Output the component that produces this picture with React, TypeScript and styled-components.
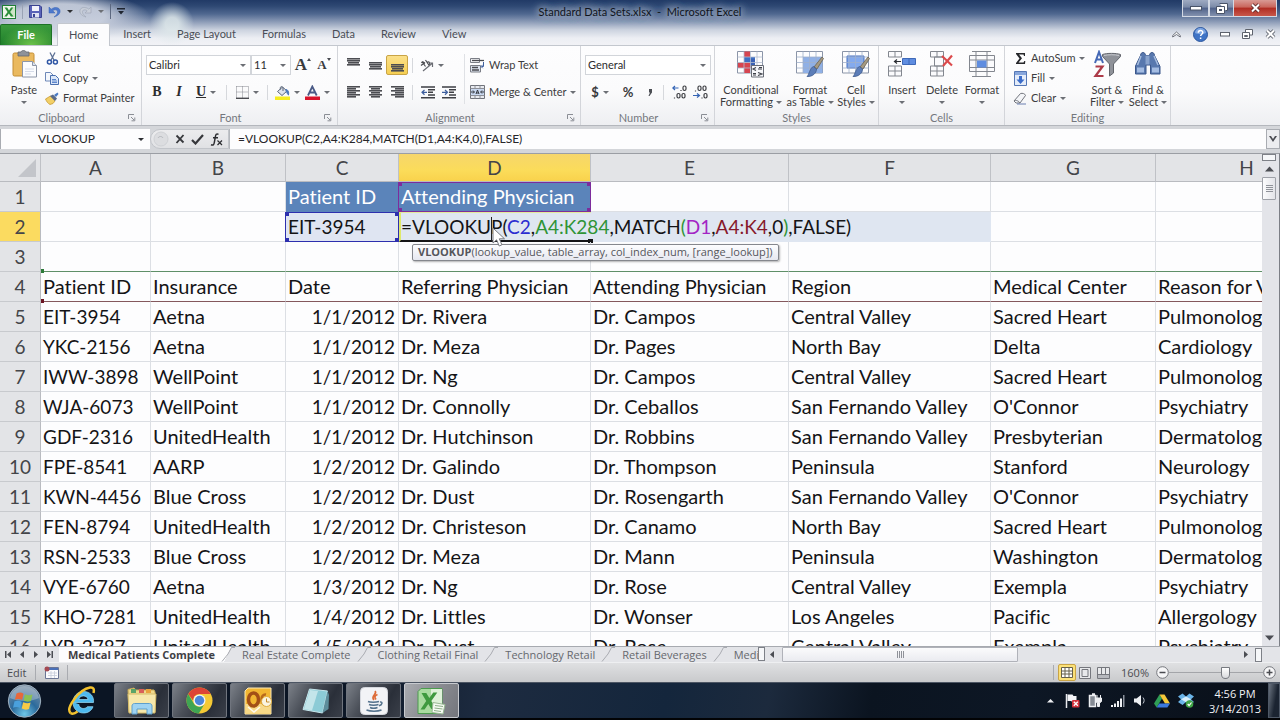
import React from "react";
import styled, { createGlobalStyle, css } from "styled-components";

const ui = `"Open Sans", "Noto Sans", sans-serif`;
const sheetFont = `Lato, "Liberation Sans", sans-serif`;

const GlobalStyle = createGlobalStyle`
  *, *::before, *::after { box-sizing: border-box; }
  html, body { margin: 0; }
  body { font: 11px/14px ${ui}; color: #3c3c3e; background: #e4e5e8; overflow: hidden; font-variant-ligatures: none; }
  button, input, select { font: inherit; color: inherit; margin: 0; padding: 0; border: 0; background: none; border-radius: 0; outline: none; }
  svg { display: block; flex: none; }
`;

/* ---------- frame ---------- */
const Window = styled.div`
  display: flex;
  flex-direction: column;
  height: 100vh;
  width: 100%;
  overflow: hidden;
`;

const Chrome = styled.header`
  flex: none;
  font-family: ${sheetFont};
  background:
    radial-gradient(ellipse 22px 22px at 172px 24px, rgba(222, 232, 234, 0.85) 30%, rgba(222, 232, 234, 0) 100%),
    radial-gradient(ellipse 90px 24px at 60px 16px, rgba(205, 211, 224, 0.9) 50%, rgba(205, 211, 224, 0) 100%),
    linear-gradient(#213a66 0, #2e4873 6px, #506890 14px, #8e9db8 22px, #ccd3df 30px, #eceef3 38px, #f1f2f6 45px);
`;

const TitleBar = styled.div`
  display: grid;
  grid-template-columns: 1fr auto 1fr;
  height: 23px;
`;

const QuickAccess = styled.div`
  display: flex;
  align-items: center;
  gap: 6px;
  padding-left: 2px;
`;

const TitleText = styled.h1`
  margin: 0;
  font-size: 11px;
  font-weight: 400;
  line-height: 23px;
  color: #10141c;
  text-shadow: 0 0 6px #a9b4c8, 0 0 8px #a9b4c8, 0 0 10px #a9b4c8, 0 0 12px #8f9cb5;
`;

const Caption = styled.div`
  display: flex;
  justify-content: flex-end;
  align-items: flex-start;
  padding-right: 3px;
`;

const CaptionButton = styled.button<{ $w: number; $close?: boolean }>`
  display: flex;
  align-items: center;
  justify-content: center;
  width: ${(p) => p.$w}px;
  height: 17px;
  && {
    border: 1px solid #d3d9e4;
    border-top: 0;
    border-left-width: ${(p) => (p.$close ? 0 : 1)}px;
    background: ${(p) =>
      p.$close
        ? "linear-gradient(#d99a94 0, #c9655b 45%, #b02c22 50%, #c8574a 100%)"
        : "linear-gradient(#9fabc2 0, #7b8aa8 45%, #4f6189 50%, #8291ae 100%)"};
  }
`;

const TabBar = styled.nav`
  display: flex;
  align-items: stretch;
  height: 23px;
  border-bottom: 1px solid #c3c7ce;
`;

const FileTab = styled.button`
  width: 52px;
  && {
    margin: 1px 5px 0 0;
    color: #fff;
    font-weight: 700;
    border: 1px solid #1d7226;
    border-bottom: 0;
    border-radius: 2px 2px 0 0;
    background: radial-gradient(ellipse at 60% 100%, #6cc24a 0, rgba(90, 180, 60, 0) 70%), linear-gradient(#3a9a3c, #1f7f2b);
  }
`;

const Tab = styled.button<{ $active?: boolean }>`
  && { padding: 0 13px; color: #4a4e56; }
  ${(p) =>
    p.$active &&
    css`
      && {
        margin-bottom: -1px;
        padding: 0 11px;
        border: 1px solid #c3c7ce;
        border-bottom: 0;
        border-radius: 2px 2px 0 0;
        background: #fcfcfd;
      }
    `}
`;

const TabTools = styled.div`
  display: flex;
  align-items: center;
  gap: 12px;
  margin-left: auto;
  padding-right: 4px;
`;

const PlainButton = styled.button`
  display: flex;
  align-items: center;
  justify-content: center;
`;

/* ---------- ribbon ---------- */
const Ribbon = styled.section`
  flex: none;
  display: flex;
  height: 80px;
  font-family: ${sheetFont};
  background: linear-gradient(#fdfdfe 0, #fbfbfc 55%, #eeeff2 100%);
  border-bottom: 1px solid #b4b7bd;
`;

const Group = styled.div<{ $w: number }>`
  display: flex;
  flex-direction: column;
  flex: none;
  width: ${(p) => p.$w}px;
  border-right: 1px solid #d3d5da;
`;

const GroupBody = styled.div<{ $pad?: number }>`
  display: flex;
  flex: 1;
  padding-left: ${(p) => p.$pad ?? 4}px;
`;

const GroupLabel = styled.div<{ $launcher?: boolean }>`
  display: grid;
  grid-template-columns: ${(p) => (p.$launcher ? "1fr 18px" : "1fr")};
  align-items: center;
  height: 15px;
  color: #74777d;
  text-align: center;
`;

const Rows = styled.div`
  display: flex;
  flex-direction: column;
  gap: 7px;
  padding-top: 9px;
`;

const Row = styled.div`
  display: flex;
  align-items: center;
  height: 20px;
`;

const Tool = styled.button<{ $w?: number; $on?: boolean }>`
  display: flex;
  align-items: center;
  justify-content: center;
  gap: 4px;
  flex: none;
  width: ${(p) => (p.$w ? `${p.$w}px` : "auto")};
  height: 20px;
  white-space: nowrap;
  ${(p) =>
    p.$on &&
    css`
      && {
        border: 1px solid #c9a446;
        border-radius: 2px;
        background: linear-gradient(#fbe08a, #f6cf52);
      }
    `}
`;

const Letter = styled.span<{ $kind: "b" | "i" | "u" }>`
  font: 14px/16px "Liberation Serif", serif;
  font-weight: 700;
  color: #2c2c2e;
  font-style: ${(p) => (p.$kind === "i" ? "italic" : "normal")};
  text-decoration: ${(p) => (p.$kind === "u" ? "underline" : "none")};
`;

const GrowLetter = styled.span<{ $small?: boolean }>`
  display: flex;
  font: 700 ${(p) => (p.$small ? 13 : 17)}px/20px "Liberation Serif", serif;
  color: #3a3b3f;
  svg { margin-top: 3px; }
`;

const Glyph = styled.span`
  font-size: 13px;
  font-weight: 700;
  color: #3a3a3c;
`;

const Divider = styled.span<{ $m?: number; $c?: string }>`
  flex: none;
  width: 1px;
  height: 15px;
  margin: 0 ${(p) => p.$m ?? 4}px;
  background: ${(p) => p.$c ?? "#d6d8dc"};
`;

const BlockDivider = styled.span`
  flex: none;
  width: 1px;
  height: 50px;
  margin: 8px 5px 0;
  background: #dfe1e5;
`;

const Caret = styled.span<{ $dark?: boolean }>`
  flex: none;
  border: 3px solid transparent;
  border-top-color: ${(p) => (p.$dark ? "#2d2f33" : "#6c6f75")};
  border-bottom: 0;
`;

const Combo = styled.span<{ $w: number }>`
  display: flex;
  align-items: center;
  width: ${(p) => p.$w}px;
  height: 20px;
  padding-right: 4px;
  border: 1px solid #d2d5da;
  background: #fff;
  select {
    flex: 1;
    min-width: 0;
    padding-left: 2px;
    appearance: none;
    color: #2c2c2e;
  }
`;

const SmallList = styled.div`
  display: flex;
  flex-direction: column;
  padding-top: 2px;
`;

const SmallButton = styled.button`
  display: flex;
  align-items: center;
  gap: 4px;
  height: 20px;
  text-align: left;
  white-space: nowrap;
`;

const SmallIcon = styled.span`
  display: flex;
  justify-content: center;
  width: 14px;
`;

const Big = styled.button<{ $w: number }>`
  display: flex;
  flex-direction: column;
  align-items: center;
  justify-content: flex-start;
  flex: none;
  width: ${(p) => p.$w}px;
  && { padding-top: 4px; }
  line-height: 12px;
  white-space: nowrap;
  svg { margin-bottom: 6px; }
`;

const BigLine = styled.span`
  display: flex;
  align-items: center;
  justify-content: center;
  gap: 3px;
  height: 12px;
`;

/* ---------- formula bar ---------- */
const FormulaBar = styled.div`
  flex: none;
  display: flex;
  align-items: stretch;
  height: 27px;
  padding: 3px 0 4px;
  background: #d4d6da;
  font: 12px/20px ${sheetFont};
  color: #26262a;
`;

const NameBox = styled.label`
  display: flex;
  align-items: center;
  width: 150px;
  padding-right: 6px;
  background: #fdfdfe;
  border-left: 1px solid #a9acb2;
  input { flex: 1; min-width: 0; padding-right: 6px; text-align: center; }
`;

const FormulaTools = styled.div`
  display: flex;
  align-items: center;
  gap: 6px;
  width: 79px;
  padding-left: 2px;
  border: 1px solid #c2c5ca;
  border-radius: 10px 0 0 10px;
  background: linear-gradient(#ececee, #e0e1e4);
`;

const FormulaInput = styled.input`
  flex: 1;
  min-width: 0;
  && { padding-left: 8px; background: #fdfdfe; border-left: 1px solid #b5b8bd; }
`;

const Expand = styled.button`
  display: flex;
  align-items: center;
  justify-content: center;
  width: 14px;
  && { border: 1px solid #a9acb2; background: #ecedf0; }
`;

/* ---------- sheet ---------- */
const SheetArea = styled.main`
  flex: 1;
  display: flex;
  min-height: 0;
`;

const Viewport = styled.div`
  flex: 1;
  min-width: 0;
  overflow: hidden;
  background: #fdfdfe;
  border-top: 1px solid #9b9ea4;
`;

const Grid = styled.table`
  table-layout: fixed;
  width: 1338px;
  border-collapse: separate;
  border-spacing: 0;
  font: 20px/29px ${sheetFont};
  font-variant-ligatures: none;
  color: #141416;
`;

const ColHead = styled.th<{ $on?: boolean }>`
  height: 28px;
  padding: 0;
  font-size: 19px;
  font-weight: 400;
  line-height: 27px;
  color: #444549;
  border-right: 1px solid #bfc1c6;
  border-bottom: 1px solid #b9bbc0;
  background: ${(p) => (p.$on ? "linear-gradient(#f6d66b, #fbdc5a 60%, #f9d24c)" : "#e3e4e7")};
`;

const Corner = styled.td`
  padding: 0 4px 4px 0;
  vertical-align: bottom;
  border-right: 1px solid #bfc1c6;
  border-bottom: 1px solid #b9bbc0;
  background: #e3e4e7;
  svg { margin-left: auto; }
`;

const RowHead = styled.th<{ $on?: boolean }>`
  height: 30px;
  padding: 0;
  font-size: 19px;
  font-weight: 400;
  color: #444549;
  border-right: 1px solid #b9bbc0;
  border-bottom: 1px solid #c8cace;
  background: ${(p) => (p.$on ? "#fbdb60" : "#e3e4e7")};
`;

const Cell = styled.td<{ $right?: boolean; $code?: boolean; $kind?: "title" | "ref" | "edit" | "aboveTable" | "head" }>`
  position: relative;
  height: 30px;
  padding: 0 3px 0 2px;
  font-size: ${(p) => (p.$code ? 19 : 20)}px;
  white-space: nowrap;
  text-align: ${(p) => (p.$right ? "right" : "left")};
  border-right: 1px solid #dcdfe4;
  border-bottom: 1px solid #dcdfe4;
  ${(p) => p.$kind === "title" && css`background: #5b84ba; color: #fff; border-color: #5b84ba;`}
  ${(p) => p.$kind === "ref" && css`background: #dfe5f2;`}
  ${(p) => p.$kind === "edit" && css`background: #dfe6f1; border-color: #dfe6f1;`}
  ${(p) => p.$kind === "aboveTable" && css`border-bottom-color: #5f8f68;`}
  ${(p) => p.$kind === "head" && css`border-bottom-color: #84585d;`}
`;

const RangeBox = styled.span<{ $c: string }>`
  position: absolute;
  inset: 0 -1px -1px -1px;
  border: 1px solid ${(p) => p.$c};
  background:
    linear-gradient(${(p) => p.$c} 0 0) 0 0 / 3px 3px no-repeat,
    linear-gradient(${(p) => p.$c} 0 0) 100% 0 / 3px 3px no-repeat,
    linear-gradient(${(p) => p.$c} 0 0) 0 100% / 3px 3px no-repeat,
    linear-gradient(${(p) => p.$c} 0 0) 100% 100% / 3px 3px no-repeat;
`;

const RangeHandle = styled.span<{ $c: string }>`
  position: absolute;
  left: 0;
  bottom: -2px;
  width: 3px;
  height: 4px;
  background: ${(p) => p.$c};
`;

const EditEdge = styled.span`
  position: absolute;
  left: 0;
  top: 0;
  bottom: -1px;
  width: 192px;
  border-left: 2px solid #dfe96a;
  border-top: 1px solid #e3ea9a;
  border-bottom: 2px solid #151517;
`;

const FillHandle = styled.span`
  position: absolute;
  left: 189px;
  bottom: -2px;
  width: 5px;
  height: 4px;
  background: #151517;
`;

const EditText = styled.span`
  position: relative;
`;

const Ink = styled.span<{ $c: string }>`
  color: ${(p) => p.$c};
`;

const TextCaret = styled.span`
  display: inline-block;
  width: 1px;
  height: 24px;
  margin: -6px -1px -6px 0;
  vertical-align: middle;
  background: #222;
`;

const Pointer = styled.svg`
  position: absolute;
  left: 93px;
  top: 15px;
  z-index: 3;
`;

const Hint = styled.span`
  position: absolute;
  left: 13px;
  top: 32px;
  z-index: 2;
  height: 17px;
  padding: 0 5px;
  font: 11px/14px ${ui};
  color: #55565c;
  border: 1px solid #85878d;
  border-radius: 2px;
  background: linear-gradient(#fdfdfe, #e6e8f0);
  box-shadow: 1px 1px 2px rgba(0, 0, 0, 0.3);
`;

const VScroll = styled.div`
  display: flex;
  flex-direction: column;
  align-items: center;
  flex: none;
  width: 18px;
  padding-right: 3px;
  background: #e3e4e9;
  border-top: 1px solid #9b9ea4;
  border-right: 1px solid #7c7f86;
`;

const SplitGrip = styled.span<{ $side?: boolean }>`
  flex: none;
  width: ${(p) => (p.$side ? 7 : 14)}px;
  height: ${(p) => (p.$side ? 14 : 7)}px;
  border: 1px solid #7d8087;
  background: #f6f7f9;
`;

const VThumb = styled.div`
  display: flex;
  align-items: center;
  justify-content: center;
  width: 14px;
  height: 23px;
  border: 1px solid #9ea1a8;
  border-radius: 1px;
  background: linear-gradient(90deg, #fcfcfd, #e3e4e9);
`;

const Push = styled.span`
  flex: 1;
`;

/* ---------- sheet tabs ---------- */
const SheetBar = styled.div`
  flex: none;
  display: flex;
  align-items: stretch;
  height: 16px;
  padding-right: 2px;
  background: #e3e4e8;
  border-top: 1px solid #a7aab0;
`;

const SheetNav = styled.div`
  display: flex;
  align-items: center;
  justify-content: space-between;
  width: 59px;
  padding: 0 6px 0 5px;
`;

const SheetTabs = styled.div`
  display: flex;
  flex: none;
  width: 699px;
  overflow: hidden;
`;

const SheetTab = styled.button<{ $active?: boolean }>`
  flex: none;
  display: flex;
  align-items: center;
  gap: 6px;
  && {
    padding-left: ${(p) => (p.$active ? 9 : 7)}px;
    color: ${(p) => (p.$active ? "#3f4045" : "#66686e")};
    font-weight: ${(p) => (p.$active ? 700 : 400)};
    background: ${(p) => (p.$active ? "linear-gradient(115deg, #fdfdfe 94%, transparent 94%)" : "transparent")};
  }
  white-space: nowrap;
`;

const HScroll = styled.div`
  display: flex;
  align-items: center;
  flex: 1;
  gap: 6px;
  padding-right: 16px;
`;

const HTrack = styled.div`
  flex: 1;
  align-self: stretch;
`;

const HThumb = styled.div`
  display: flex;
  align-items: center;
  justify-content: center;
  width: 52%;
  height: 100%;
  border: 1px solid #b0b2b9;
  border-radius: 1px;
  background: linear-gradient(#fbfbfc, #eaebf0);
`;

const StatusBar = styled.footer`
  flex: none;
  display: flex;
  align-items: center;
  height: 20px;
  padding: 0 4px 0 7px;
  background: linear-gradient(#dfe0e2, #c9cacc);
  border-top: 1px solid #eeeff1;
  color: #4a4b50;
`;

const ViewButton = styled.button<{ $on?: boolean }>`
  display: flex;
  align-items: center;
  justify-content: center;
  width: 18px;
  height: 17px;
  ${(p) => p.$on && css`&& { border: 1px solid #c9a446; border-radius: 2px; background: #fbe178; }`}
`;

const ZoomValue = styled.span`
  margin: 0 7px 0 9px;
`;

const ZoomSlider = styled.input`
  width: 94px;
  height: 16px;
  appearance: none;
  && { background: linear-gradient(#a3a5a9, #a3a5a9) center / 100% 1px no-repeat; }
  &::-webkit-slider-thumb {
    appearance: none;
    width: 9px;
    height: 12px;
    border: 1px solid #777a80;
    border-radius: 1px 1px 5px 5px;
    background: linear-gradient(#fff, #d9dadd);
  }
`;

/* ---------- taskbar ---------- */
const Taskbar = styled.nav`
  flex: none;
  display: flex;
  align-items: stretch;
  height: 38px;
  border-top: 1px solid #4c5563;
  border-bottom: 2px solid #020305;
  background: linear-gradient(100deg, #0b1524 0 26%, #1d2b40 38%, #14263c 52%, #1c2a3d 60%, #0b1420 68%, #0d1725 80%, #090f18 100%);
`;

const Pinned = styled.button<{ $w: number }>`
  display: flex;
  align-items: center;
  justify-content: center;
  width: ${(p) => p.$w}px;
`;

const TaskButton = styled.button<{ $active?: boolean }>`
  display: flex;
  align-items: center;
  justify-content: center;
  width: 55px;
  && {
    margin-right: 3px;
    border: 1px solid ${(p) => (p.$active ? "#c7cacf" : "#70757e")};
    border-radius: 2px;
    background: ${(p) =>
      p.$active
        ? "linear-gradient(120deg, #a9abb0, #8a8c92 50%, #74767c)"
        : "linear-gradient(120deg, #7b8088 0, #4b5059 35%, #2a2f39 70%, #3a3f49 100%)"};
  }
`;

const Tray = styled.div`
  display: flex;
  align-items: center;
  gap: 8px;
  margin-left: auto;
  padding-right: 11px;
`;

const Clock = styled.time`
  align-self: center;
  width: 60px;
  margin-right: 3px;
  color: #f1f3f6;
  line-height: 15px;
  text-align: center;
`;

const ShowDesktop = styled.button`
  width: 12px;
  && { border: 1px solid #4e5866; background: linear-gradient(100deg, #6b7480, #1b2431 60%); }
`;

/* ---------- icons ---------- */
const ExcelIcon = ({ size = 14 }: { size?: number }) => (
  <svg width={size} height={size} viewBox="0 0 14 14">
    <rect x="0.5" y="0.5" width="13" height="13" fill="#eef6ea" stroke="#1e7f35" />
    <path d="M9 2h4v10H9z" fill="#cfe6c8" />
    <path d="M2.500 2.500h2.600L7 5.600l2-3.100h2.300L8.200 7l3.300 4.600H8.800L6.900 8.500 4.800 11.600H2.300L5.600 7z" fill="#2b8f3a" />
  </svg>
);
const SaveIcon = () => (
  <svg width="13" height="13" viewBox="0 0 13 13">
    <path d="M0.500 0.500h10.500l1.500 1.500v10.500h-12z" fill="#5a63b8" stroke="#3a4390" />
    <path d="M3 1h7v5H3z" fill="#f3f4fb" />
    <path d="M3 8h7v4.500H3z" fill="#dfe2f2" />
    <path d="M4 9h2v3H4z" fill="#3a4390" />
  </svg>
);
const UndoIcon = () => (
  <svg width="13" height="12" viewBox="0 0 13 12">
    <path d="M1 1v6h6L4.800 4.800C7 3 10 3.800 9.500 6.500 9.300 8 8 9.500 6 11c4-1 6.500-3.500 6-6.500C11.400 1 6.500.5 3.200 3.200z" fill="#4d79cc" stroke="#3560b4" strokeWidth="0.500" />
  </svg>
);
const RedoIcon = () => (
  <svg width="13" height="12" viewBox="0 0 13 12" opacity="0.700">
    <path d="M12 1v6H6l2.200-2.200C6 3 3 3.800 3.500 6.500 3.700 8 5 9.500 7 11 3 10 .5 7.500 1 4.500 1.600 1 6.500.5 9.800 3.200z" fill="#ccd1da" stroke="#8d95a5" strokeWidth="0.600" />
  </svg>
);
const CustomizeIcon = () => (
  <svg width="8" height="7" viewBox="0 0 8 7"><path d="M0 0h8v1.500H0zM1 3h6L4 6.500z" fill="#1f2530" /></svg>
);
const MinIcon = () => (
  <svg width="12" height="5" viewBox="0 0 12 5"><rect x="0.500" y="0.500" width="11" height="3.500" fill="#fff" stroke="#4a5468" /></svg>
);
const RestoreIcon = () => (
  <svg width="12" height="11" viewBox="0 0 12 11">
    <path d="M3.500.5h8v7h-2M.5 3.500h8v7h-8z" fill="#fff" stroke="#4a5468" />
    <path d="M3 6h3v2H3z" fill="#4a5468" />
  </svg>
);
const CloseIcon = ({ line = "#5c2a2a" }: { line?: string }) => (
  <svg width="11" height="10" viewBox="0 0 11 10">
    <path d="M2 1.500l7 7M9 1.500l-7 7" stroke={line} strokeWidth="3.800" />
    <path d="M2 1.500l7 7M9 1.500l-7 7" stroke="#fff" strokeWidth="2" />
  </svg>
);
const CollapseIcon = () => (
  <svg width="9" height="7" viewBox="0 0 9 7"><path d="M.7 6V4.500L4.500 1l3.800 3.500V6L4.500 3.500z" fill="#fff" stroke="#5d626c" strokeWidth="0.900" /></svg>
);
const HelpIcon = () => (
  <svg width="15" height="15" viewBox="0 0 15 15">
    <circle cx="7.500" cy="7.500" r="7" fill="#3f74c6" stroke="#2c579e" />
    <path d="M2 6a5.500 5 0 0 1 11 0c-3 1.500-8 1.500-11 0z" fill="#7ea6e2" />
    <path d="M5.300 5.800c0-3 4.500-3 4.500-.3 0 1.700-2.200 1.800-2.200 3.600M7.600 10.600v1.500" stroke="#fff" strokeWidth="1.500" fill="none" />
  </svg>
);
const DocMinIcon = () => (
  <svg width="10" height="5" viewBox="0 0 10 5"><rect x="0.500" y="0.500" width="9" height="3.500" fill="#fff" stroke="#5d626c" /></svg>
);
const DocRestoreIcon = () => (
  <svg width="11" height="10" viewBox="0 0 11 10"><path d="M3.500 3V.5h7v5.500H8M.5 3.500h7v6h-7zM2.500 6.500h3v1h-3z" fill="#fff" stroke="#5d626c" /></svg>
);
const PasteIcon = () => (
  <svg width="28" height="28" viewBox="0 0 28 28">
    <rect x="3" y="3" width="21" height="23" rx="1.500" fill="#eab95f" stroke="#c48e35" />
    <path d="M8 2h3c.5-2 4.500-2 5 0h3v4H8z" fill="#8e9299" stroke="#64686f" strokeWidth="0.800" />
    <path d="M12.500 11.500h10l4 4v11.500h-14z" fill="#fbfcfe" stroke="#8d96a8" />
    <path d="M22.500 11.500v4h4" fill="#dce3ef" stroke="#8d96a8" />
    <path d="M15 19h9M15 21.500h9M15 24h6" stroke="#d5dbe8" />
  </svg>
);
const CutIcon = () => (
  <svg width="13" height="13" viewBox="0 0 13 13">
    <path d="M4 .5l4.200 8M9 .5l-4.200 8" stroke="#5b6f94" strokeWidth="1.300" />
    <circle cx="3.400" cy="10" r="2" fill="none" stroke="#2f56a5" strokeWidth="1.500" />
    <circle cx="9.400" cy="10" r="2" fill="none" stroke="#2f56a5" strokeWidth="1.500" />
  </svg>
);
const CopyIcon = () => (
  <svg width="14" height="13" viewBox="0 0 14 13">
    <path d="M.5.5h5l2.500 2.500v6H.5z" fill="#f4f7fc" stroke="#6e88b8" />
    <path d="M5.500 3.500h5l3 3v6h-8z" fill="#dce7f8" stroke="#4a6fae" />
    <path d="M7 7.500h4M7 9h5M7 10.500h5" stroke="#5d86cc" />
  </svg>
);
const PainterIcon = () => (
  <svg width="14" height="13" viewBox="0 0 14 13">
    <path d="M.5 7l5-3 4.500 5-2 2.500-3 1c-2-1-3.500-3-4.500-5.500z" fill="#f2cf66" stroke="#c79a34" strokeWidth="0.800" />
    <path d="M5 4l3-1.500 4 4-2 2.500z" fill="#5a6a88" />
    <path d="M9 3l3.500-2.500L13.500 2 11 5z" fill="#4a7ac4" />
  </svg>
);
const LauncherIcon = () => (
  <svg width="8" height="8" viewBox="0 0 8 8"><path d="M.5 5V.5H6M3 3l3 3M6.800 3.500v3.300H3.500" fill="none" stroke="#8b8e95" /></svg>
);
const BordersIcon = () => (
  <svg width="13" height="13" viewBox="0 0 13 13">
    <path d="M.5.5h12v11M.5.5v11M6.500.5v11M.5 6h12" fill="none" stroke="#85878e" strokeDasharray="1 1" />
    <path d="M0 12.300h13" stroke="#4a4b50" strokeWidth="1.400" />
  </svg>
);
const FillColorIcon = () => (
  <svg width="15" height="15" viewBox="0 0 15 15">
    <path d="M2.500 6.500l5-4.500 4.500 4-5 4.500z" fill="#dfe4ec" stroke="#5a6579" />
    <path d="M5.500 4.500c-1-3 1.500-4 2.500-1.500v3" fill="none" stroke="#5a6579" />
    <path d="M11 4.500c2.500.5 3 2.500 2.500 5.500-1-.5-1.500-2.500-2.500-4z" fill="#4c79bb" stroke="#4c79bb" />
    <path d="M0 11.500h15v3.500H0z" fill="#f6ec1e" />
  </svg>
);
const FontColorIcon = () => (
  <svg width="15" height="15" viewBox="0 0 15 15">
    <path d="M3 10.500L7.300 1.500l4.400 9M4.500 7.500h5.500" fill="none" stroke="#4a5a86" strokeWidth="1.800" />
    <path d="M0 11.500h15v3.500H0z" fill="#d9142c" />
  </svg>
);
const LinesIcon = ({ rows, top = 0 }: { rows: number[][]; top?: number }) => (
  <svg width="13" height="14" viewBox="0 0 13 14">
    {rows.map(([x, w], i) => (
      <rect key={i} x={x} y={top + i * 2} width={w} height="1.600" fill="#4c4d52" />
    ))}
  </svg>
);
const full = [[0, 13], [0, 13], [1, 11], [0, 13]];
const OrientationIcon = () => (
  <svg width="14" height="14" viewBox="0 0 14 14">
    <path d="M1 7.500l4-3M2 3.500l3.500 5M1.500 5c1-2 3-1 3 1M5.500 2l4 6M7 4.500c2-2 4 1 1.500 3" fill="none" stroke="#4c4d52" strokeWidth="1.200" />
    <path d="M3 13L12 5.500M12.500 9V5H9" fill="none" stroke="#6b6d74" strokeWidth="1.200" />
  </svg>
);
const IndentIcon = ({ out }: { out?: boolean }) => (
  <svg width="14" height="13" viewBox="0 0 14 13">
    <path d="M0 1h14M7 3.700h7M7 6.300h5M7 9h7M0 11.700h14" stroke="#3e3f44" strokeWidth="1.600" />
    <path d={out ? "M6 6.300H1.500M3.500 4L1 6.300l2.500 2.400" : "M0 6.300h4.500M3 4l2.500 2.300L3 8.700"} fill="none" stroke="#3e5f9e" strokeWidth="1.200" />
  </svg>
);
const WrapIcon = () => (
  <svg width="15" height="15" viewBox="0 0 15 15">
    <path d="M.5.5h9v4h-9z" fill="#f1f2f5" stroke="#7b7e86" />
    <path d="M2 2.500h12" stroke="#4a4b50" strokeWidth="1.300" />
    <path d="M.5 7.500h10v6.500H.5z" fill="#dde3ee" stroke="#7b7e86" />
    <path d="M2 9.500h6M2 12h7" stroke="#4a4b50" strokeWidth="1.300" />
    <path d="M13.500 4v4.500h-2M12.700 6.800l-1.700 1.700 1.700 1.700" fill="none" stroke="#3e5f9e" />
  </svg>
);
const MergeIcon = () => (
  <svg width="15" height="14" viewBox="0 0 15 14">
    <path d="M.5.5h14v13H.5z" fill="#e9ebf0" stroke="#70737b" />
    <path d="M.5 3.500h14M.5 10.500h14M5 .5v3M10 .5v3M5 10.500v3M10 10.500v3" stroke="#8d9098" />
    <path d="M1 4h13v6H1z" fill="#c9d8f0" />
    <path d="M1 7h3M11 7h3M3 5.500L4.500 7 3 8.500M12 5.500L10.500 7 12 8.500M6 9l1.500-4L9 9M6.500 8h2" fill="none" stroke="#33363d" />
  </svg>
);
const DecimalIcon = ({ dec }: { dec?: boolean }) => (
  <svg width="15" height="14" viewBox="0 0 15 14">
    <g fill="none" stroke="#3f4045" strokeWidth="1.200">
      {dec ? (
        <>
          <rect x="5" y="1" width="3" height="4.500" rx="1.400" /><rect x="10" y="1" width="3" height="4.500" rx="1.400" />
          <rect x="11" y="8.500" width="3" height="4.500" rx="1.400" /><path d="M2.500 5.500v1M9 12.500v1" />
        </>
      ) : (
        <>
          <rect x="11" y="1" width="3" height="4.500" rx="1.400" /><path d="M9 5v1M2.500 12.500v1" />
          <rect x="5" y="8.500" width="3" height="4.500" rx="1.400" /><rect x="10" y="8.500" width="3" height="4.500" rx="1.400" />
        </>
      )}
    </g>
    <path d={dec ? "M0 10.500h6M4 8.500l2.500 2L4 12.500" : "M6.500 3H1M3 1L.8 3 3 5"} fill="none" stroke="#3565b5" strokeWidth="1.200" />
  </svg>
);
const GridBase = ({ fill, brush }: { fill: React.ReactNode; brush: React.ReactNode }) => (
  <svg width="28" height="28" viewBox="0 0 28 28">
    <path d="M.5 1.500h26v21.500H.5z" fill="#fdfdfe" stroke="#8b95a8" />
    {fill}
    <path d="M.5 7h26M.5 12.500h26M.5 18h26M7 1.500v21.500M13.500 1.500v21.500M20 1.500v21.500" fill="none" stroke="#9fb0cc" strokeWidth="0.800" />
    {brush}
  </svg>
);
const CondIcon = () => (
  <svg width="28" height="28" viewBox="0 0 28 28">
    <path d="M.5 1.500h25v21.500H.5z" fill="#fdfdfe" stroke="#8b95a8" />
    <path d="M7 1.500h6v5.500H7zM1 12.500h6V18H1zM7 18h6v5H7z" fill="#d64550" />
    <path d="M7 7h11v5.500H7z" fill="#3d6fc4" /><path d="M7 12.500h8V18H7z" fill="#d64550" /><path d="M13 9h5v7h-5z" fill="#3b62b5" />
    <path d="M.5 7h25M.5 12.500h25M.5 18h25M7 1.500v21.500M13.500 1.500v21.500M20 1.500v21.500" stroke="#b3bdd0" strokeWidth="0.800" />
    <path d="M14.500 15.500h12v11.500h-12z" fill="#f6f7fa" stroke="#686c76" />
    <path d="M19 17.500l-3 1.500 3 1.500M21 19h4M22 17.500h3M16 23.500h3M16 25h3M21 22.500l4 1.500-4 1.500" fill="none" stroke="#3c3f47" strokeWidth="1.100" />
  </svg>
);
const Brush = () => (
  <>
    <path d="M26 7l1.500 1.500-6.500 10.500-3-2z" fill="#a59a82" stroke="#6b6250" strokeWidth="0.800" />
    <path d="M17.500 16.500l3 2.500c0 4-4 8-9.500 7.500 2-1.500 3-9 6.500-10z" fill="#5c7db8" stroke="#3e5a8e" strokeWidth="0.800" />
  </>
);
const FormatTableIcon = () => (
  <GridBase fill={<path d="M7 7h19.500v16H7z" fill="#8fb0e6" />} brush={<Brush />} />
);
const CellStylesIcon = () => (
  <GridBase fill={<path d="M5 6h17v12H5z" fill="#84aaee" stroke="#456fc0" />} brush={<Brush />} />
);
const InsertIcon = () => (
  <svg width="28" height="28" viewBox="0 0 28 28">
    <path d="M.5 1.500h13v5.500H.5zM7 1.500V7M.5 16h13v10H.5zM.5 21h13M7 16v10" fill="#fbfbfd" stroke="#83878f" />
    <path d="M14.500 8.500h13v6h-13z" fill="#5f8de0" stroke="#3f69b8" /><path d="M21 8.500v6" stroke="#3f69b8" />
    <path d="M13 11.500H7M9 9.500l-2.500 2L9 13.500" fill="none" stroke="#2b2d33" strokeWidth="1.200" />
  </svg>
);
const DeleteIcon = () => (
  <svg width="24" height="28" viewBox="0 0 24 28">
    <path d="M.5 1.500h13v5.500H.5zM7 1.500V7M.5 16h13v10H.5zM.5 21h13M7 16v10M4.500 7h9v9h-9z" fill="#fbfbfd" stroke="#83878f" />
    <path d="M12 6l10 9.500M22 5.500L13 16" stroke="#dc4a4c" strokeWidth="2.200" />
  </svg>
);
const FormatIcon = () => (
  <svg width="28" height="28" viewBox="0 0 28 28">
    <path d="M1.500 5.500h25v16h-25z" fill="#fbfbfd" stroke="#83878f" />
    <path d="M8 1v25M19 1v25M1.500 10h25M1.500 17.500h25M4 1.500h19M4 26.500h19" fill="none" stroke="#83878f" />
    <path d="M9 10.500h9.500v7H9z" fill="#5f8de0" />
  </svg>
);
const SumIcon = () => (
  <svg width="13" height="13" viewBox="0 0 13 13"><path d="M2 1h9v3h-1L9.500 2.500H5L8 6.300 4.600 10.500H9.500L10.300 9h1L11 12H2v-1L5.500 6.500 2 2z" fill="#26272b" /></svg>
);
const FillIcon = () => (
  <svg width="13" height="15" viewBox="0 0 13 15">
    <path d="M.5.5h12v14H.5z" fill="#e4ecf9" stroke="#5577b5" /><path d="M1 1h11v3H1z" fill="#87a6dc" />
    <path d="M5 5h3v3.500h2.500L6.500 13 2.500 8.500H5z" fill="#3b6cc9" />
  </svg>
);
const ClearIcon = () => (
  <svg width="14" height="13" viewBox="0 0 14 13">
    <path d="M1 9L7.500 1.500c2-.5 4.500 0 5 2L7 11H3z" fill="#f4f5f8" stroke="#73767e" />
    <path d="M1 9c.5-1 4-1 6 2" fill="none" stroke="#73767e" /><path d="M4 12h9" stroke="#6a7fb0" />
  </svg>
);
const SortIcon = () => (
  <svg width="28" height="28" viewBox="0 0 28 28">
    <path d="M2 13L6 2l4 11M3.500 9.500h5" fill="none" stroke="#4468b5" strokeWidth="2" />
    <path d="M2.500 16.500h7L2.500 26h8" fill="none" stroke="#ac3a48" strokeWidth="2.200" />
    <path d="M9.500 4.500c4-1.500 14-1.500 18 0v2L20.500 14v9l-4 3V14L9.500 6.500z" fill="#8f9299" stroke="#62656c" />
    <path d="M11 5.500c4-1 11-1 15 0" stroke="#c8cad0" fill="none" />
  </svg>
);
const FindIcon = () => (
  <svg width="28" height="28" viewBox="0 0 28 28">
    <path d="M6.500 5.500c0-4 5-4 5 0h4c0-4 5-4 5 0l5.500 11v7.500h-9.500V15h-4.500v9H1.500v-8z" fill="#5878ae" stroke="#3b568a" />
    <path d="M11.500 5.500h4v9h-4z" fill="#89a3cd" />
    <path d="M3 17.500h7v5H3zM18 17.500h7v5h-7z" fill="#a4bce2" /><path d="M7 6l-3.500 9M20 6l4 9" stroke="#a8bee0" strokeWidth="1.500" />
  </svg>
);
const FlagX = () => (
  <svg width="15" height="15" viewBox="0 0 15 15">
    <path d="M1.500 1v14" stroke="#e8eaee" strokeWidth="1.500" /><path d="M2.500 1.500h5l1 1.500h3v6h-4L6 8H2.500z" fill="#f4f5f8" />
    <rect x="7" y="7" width="7.500" height="7.500" rx="1" fill="#d2323c" /><path d="M8.800 8.800l4 4M12.800 8.800l-4 4" stroke="#fff" strokeWidth="1.300" />
  </svg>
);
const PowerIcon = () => (
  <svg width="15" height="15" viewBox="0 0 15 15">
    <path d="M2.500 2.500h5v11h-6v-11zM4 1h3" fill="#858b94" stroke="#eef0f3" strokeWidth="1.500" />
    <path d="M7.500 5h6v3.500l-2 1.500v3.500h-2V10l-2-1.500zM9 2v3M12.500 2v3" fill="#eef0f3" stroke="#eef0f3" />
  </svg>
);
const SignalIcon = () => (
  <svg width="14" height="12" viewBox="0 0 14 12"><path d="M0 10h2v2H0zM3 8.500h2V12H3zM6 6h2v6H6zM9 3.500h2V12H9z" fill="#eef0f3" /><path d="M12 0h1.500v12H12z" fill="#8d949e" /></svg>
);
const SpeakerIcon = () => (
  <svg width="13" height="13" viewBox="0 0 13 13"><path d="M1 4.500h2.500L8 1v11L3.500 8.500H1z" fill="#eef0f3" /><path d="M10 3.500c1.500 2 1.500 4 0 6" fill="none" stroke="#bcc2cb" /></svg>
);
const DriveIcon = () => (
  <svg width="16" height="14" viewBox="0 0 16 14">
    <path d="M5.500.5L0 9.500l2.600 4L8 4.500z" fill="#2f9e56" /><path d="M5.500.5h5L16 9.500h-5z" fill="#f5c839" /><path d="M5.200 9.500H16l-2.600 4H2.600z" fill="#3b78dc" />
  </svg>
);
const DropboxIcon = () => (
  <svg width="16" height="15" viewBox="0 0 16 15">
    <path d="M4.500.5L0 3.500l3 2.800-3 2.700L4.500 12 8 9l3.500 3L16 9l-3-2.700 3-2.800-4.500-3L8 3.500z" fill="#6bb4e8" /><path d="M8 3.500L3 6.300 8 9.200l5-2.900z" fill="#d9eefb" />
    <circle cx="11.500" cy="11" r="3.800" fill="#3fa545" /><path d="M9.700 11l1.400 1.500 2.400-3" stroke="#fff" fill="none" strokeWidth="1.200" />
  </svg>
);
const StartOrb = () => (
  <svg width="35" height="34" viewBox="0 0 35 34">
    <defs>
      <radialGradient id="orb" cx="0.500" cy="0.900" r="0.900"><stop offset="0" stopColor="#6ec7e8" /><stop offset="0.450" stopColor="#2b6a9c" /><stop offset="1" stopColor="#8093a6" /></radialGradient>
    </defs>
    <circle cx="17.500" cy="17" r="16.200" fill="url(#orb)" stroke="#9fb0be" strokeWidth="1" />
    <path d="M3 14C5 5 12 2 17.500 2S30 5 32 14c-8 4-21 4-29 0z" fill="#fff" opacity="0.280" />
    <path d="M9.500 9.500c3-1.500 5-1.200 7 .2l-1.400 6.300c-2.500-1.300-4.500-1.300-7.200-.3z" fill="#e8683a" />
    <path d="M18 10.300c2.500 1.200 4.700 1.200 7.500.2L24 17c-2.700 1-5 .8-7.400-.4z" fill="#8cc152" />
    <path d="M7.500 17.300c2.700-1 4.700-.9 7.200.4L13.200 24c-2.300-1.300-4.500-1.300-7.200-.3z" fill="#4aa0dc" />
    <path d="M16.200 18.200c2.500 1.200 4.700 1.400 7.400.4L22 25c-2.600 1-4.800.8-7.300-.5z" fill="#f7cb45" />
  </svg>
);
const IeIcon = () => (
  <svg width="30" height="30" viewBox="0 0 30 30">
    <path d="M7.500 16.500h19c.8-6-3.500-11-9.800-11S6 10.300 6 16.300s4 10.700 10.500 10.700c4.500 0 8-2.200 9.500-6.300h-5.700c-2 3-8.300 2.300-8.500-2.500M11.800 13.500c.5-4.800 8.800-4.800 9.200 0z" fill="#4db9ee" fillRule="evenodd" stroke="#9adcf8" strokeWidth="0.700" />
    <path d="M3.500 27C-1.500 22 12 3.500 23 1.500c3.500-.6 4.500 1.500 3.500 5.500" fill="none" stroke="#f2c12e" strokeWidth="2.500" />
    <path d="M3.500 27c2 1.300 4.700.3 7-1.500" fill="none" stroke="#f2c12e" strokeWidth="2.500" />
  </svg>
);
const FolderIcon = () => (
  <svg width="32" height="30" viewBox="0 0 32 30">
    <path d="M2 3.500l6-1.500 2 2h18l1 2v20H3z" fill="#efd98d" stroke="#c9ac57" /><path d="M5 3h5v4H5z" fill="#5aa469" /><path d="M13 3h5v4h-5z" fill="#d9605a" /><path d="M20 3h5v4h-5z" fill="#e9a33e" />
    <path d="M2 8h28l-1 19H3z" fill="#f7e8ab" stroke="#d4bb6b" />
    <path d="M6 28v-8c0-1.500 1-2.500 2.500-2.500h15c1.500 0 2.500 1 2.500 2.500v8h-5v-5h-10v5z" fill="#9fd3f2" stroke="#5f9fcb" />
  </svg>
);
const ChromeIcon = () => (
  <svg width="27" height="27" viewBox="0 0 27 27">
    <circle cx="13.500" cy="13.500" r="13" fill="#f4c935" />
    <path d="M2.200 7A13 13 0 0 1 24.800 7H13.500c-4 0-6.500 3-6.300 6.800z" fill="#dc4437" />
    <path d="M2.200 7a13 13 0 0 0 10.600 19.500L18.500 17c-2.500 4-8.500 3.500-10.700-.5z" fill="#3fa553" />
    <circle cx="13.500" cy="13.500" r="6" fill="#f3f5f8" /><circle cx="13.500" cy="13.500" r="4.700" fill="#4b86d9" />
  </svg>
);
const OutlookIcon = () => (
  <svg width="28" height="28" viewBox="0 0 28 28">
    <path d="M4 1h23v26H1V4z" fill="#f2b632" stroke="#fbe9b6" /><path d="M1.500 17h25v9.500h-25z" fill="#f7d988" />
    <ellipse cx="9.500" cy="12.500" rx="5" ry="6.500" fill="none" stroke="#a34f16" strokeWidth="3.500" />
    <path d="M22 7.500c-6-1-6 11 0 10" fill="none" stroke="#b96a1c" strokeWidth="2.500" />
    <circle cx="22.500" cy="14.500" r="5" fill="#faf4e0" stroke="#e0ac3c" /><path d="M22.500 11.500v3.500h3" fill="none" stroke="#c58a2a" />
    <path d="M4 20l6 5 6-5" fill="none" stroke="#fffaf0" strokeWidth="1.500" />
  </svg>
);
const NotepadIcon = () => (
  <svg width="28" height="28" viewBox="0 0 28 28">
    <path d="M7.500 2l18 2-5 22L1 22.500z" fill="#8ccbd6" stroke="#c7e6ec" /><path d="M8 3l8 1-6 19.500-8-1.500z" fill="#c3e5ea" />
    <path d="M20.500 26l6-4 .5-14-1.500-4z" fill="#5d8d9b" />
  </svg>
);
const JavaIcon = () => (
  <svg width="28" height="28" viewBox="0 0 28 28">
    <rect x="0.500" y="0.500" width="27" height="27" rx="4" fill="#f2f3f6" stroke="#d4d7dd" />
    <path d="M15 4c3 3-5 5-1 9M17.500 7.500c-3.500 1.500-3 3-1.500 5" fill="none" stroke="#dd6b38" strokeWidth="1.700" />
    <path d="M8 14.500c2 1 8 1 11 0M9 17.500c2 1 7 1 9.500 0M10 20.500c2 1 5 1 7.500 0M20 15c3-.5 2.500 3-1 3.800M6.500 23c4 1.500 11 1.500 15 0" fill="none" stroke="#53718c" strokeWidth="1.500" />
  </svg>
);
const ExcelTaskIcon = () => (
  <svg width="29" height="28" viewBox="0 0 29 28">
    <path d="M4 1.500h21v19l-4 6H1v-22z" fill="#a9dba0" stroke="#4c9a4e" /><path d="M14 2h11v17H14z" fill="#dff2d9" />
    <path d="M4.500 6h4.800l3 5 4-5.500h4L14.300 14l5 8h-5l-3-5-3.800 5.500h-4L9.200 14z" fill="#3f9a3f" />
    <path d="M16 15.500l12 2-2 9.500-11-1.500z" fill="#f5faf2" stroke="#97b893" /><path d="M18 18.500l8 1M17.500 21l8 1M17 23.500l7 1" stroke="#8cae88" />
  </svg>
);
const MacroIcon = () => (
  <svg width="15" height="13" viewBox="0 0 15 13">
    <path d="M1.500 1.500h13v11h-13z" fill="#fbfbfd" stroke="#6a7594" /><path d="M4 2h10v2H4z" fill="#4a70b8" /><circle cx="3" cy="3" r="2.500" fill="#a44a52" />
    <path d="M4 7h9M4 9.500h9M7 5v7M10.500 5v7" stroke="#c5ccd9" strokeWidth="0.800" />
  </svg>
);
const NormalView = () => (
  <svg width="12" height="11" viewBox="0 0 12 11"><path d="M.5.5h11v10H.5zM.5 4h11M.5 7h11M4 .5v10M8 .5v10" fill="#fff" stroke="#66604a" /></svg>
);
const LayoutView = () => (
  <svg width="12" height="12" viewBox="0 0 12 12"><path d="M.5.5h11v11H.5zM3 2.500h6v7H3z" fill="#e8e9eb" stroke="#75777d" /></svg>
);
const BreakView = () => (
  <svg width="13" height="12" viewBox="0 0 13 12"><path d="M.5.500h12v11H.5zM.5 7.500h12M4.500.5v7M8.500.5v7" fill="#e8e9eb" stroke="#75777d" /><path d="M1 8h11v3H1z" fill="#b7b9be" /></svg>
);
const ZoomKnob = ({ plus }: { plus?: boolean }) => (
  <svg width="13" height="13" viewBox="0 0 13 13"><circle cx="6.500" cy="6.500" r="5.800" fill="#f6f6f7" stroke="#75777d" /><path d={plus ? "M3.500 6.500h6M6.500 3.500v6" : "M3.500 6.500h6"} stroke="#4a4b50" strokeWidth="1.500" /></svg>
);
const Tri = ({ d, w = 7, h = 7, c = "#4b4d53" }: { d: string; w?: number; h?: number; c?: string }) => (
  <svg width={w} height={h} viewBox={`0 0 ${w} ${h}`}><path d={d} fill={c} /></svg>
);
const Slant = () => (
  <svg width="14" height="15" viewBox="0 0 14 15"><path d="M1 14.500L7 7l3.500-6.500H14" fill="none" stroke="#a9abb1" /></svg>
);
const Grip = ({ vertical }: { vertical?: boolean }) => (
  <svg width="7" height="7" viewBox="0 0 7 7">
    <path d={vertical ? "M.5 0v7M2.500 0v7M4.500 0v7M6.500 0v7" : "M0 .5h7M0 2.500h7M0 4.500h7M0 6.500h7"} stroke="#8f9299" />
  </svg>
);

/* ---------- data ---------- */
const columns = [
  { name: "A", w: 110 }, { name: "B", w: 135 }, { name: "C", w: 113 }, { name: "D", w: 192 },
  { name: "E", w: 198 }, { name: "F", w: 202 }, { name: "G", w: 165 }, { name: "H", w: 182 },
];
const header = ["Patient ID", "Insurance", "Date", "Referring Physician", "Attending Physician", "Region", "Medical Center", "Reason for Visit"];
const records = [
  ["EIT-3954", "Aetna", "1/1/2012", "Dr. Rivera", "Dr. Campos", "Central Valley", "Sacred Heart", "Pulmonology"],
  ["YKC-2156", "Aetna", "1/1/2012", "Dr. Meza", "Dr. Pages", "North Bay", "Delta", "Cardiology"],
  ["IWW-3898", "WellPoint", "1/1/2012", "Dr. Ng", "Dr. Campos", "Central Valley", "Sacred Heart", "Pulmonology"],
  ["WJA-6073", "WellPoint", "1/1/2012", "Dr. Connolly", "Dr. Ceballos", "San Fernando Valley", "O'Connor", "Psychiatry"],
  ["GDF-2316", "UnitedHealth", "1/1/2012", "Dr. Hutchinson", "Dr. Robbins", "San Fernando Valley", "Presbyterian", "Dermatology"],
  ["FPE-8541", "AARP", "1/2/2012", "Dr. Galindo", "Dr. Thompson", "Peninsula", "Stanford", "Neurology"],
  ["KWN-4456", "Blue Cross", "1/2/2012", "Dr. Dust", "Dr. Rosengarth", "San Fernando Valley", "O'Connor", "Psychiatry"],
  ["FEN-8794", "UnitedHealth", "1/2/2012", "Dr. Christeson", "Dr. Canamo", "North Bay", "Sacred Heart", "Pulmonology"],
  ["RSN-2533", "Blue Cross", "1/2/2012", "Dr. Meza", "Dr. Mann", "Peninsula", "Washington", "Dermatology"],
  ["VYE-6760", "Aetna", "1/3/2012", "Dr. Ng", "Dr. Rose", "Central Valley", "Exempla", "Psychiatry"],
  ["KHO-7281", "UnitedHealth", "1/4/2012", "Dr. Littles", "Dr. Wonser", "Los Angeles", "Pacific", "Allergology"],
  ["LYR-2787", "UnitedHealth", "1/5/2012", "Dr. Dust", "Dr. Rose", "Central Valley", "Exempla", "Psychiatry"],
];
const sheets = ["Medical Patients Complete", "Real Estate Complete", "Clothing Retail Final", "Technology Retail", "Retail Beverages", "Medical Patients"];
const tabs = ["Home", "Insert", "Page Layout", "Formulas", "Data", "Review", "View"];

const BigTool = ({ w, icon, lines, caretBelow }: { w: number; icon: React.ReactNode; lines: string[]; caretBelow?: boolean }) => (
  <Big $w={w}>
    {icon}
    {lines.map((line, i) => (
      <BigLine key={line}>
        {line}
        {!caretBelow && i === lines.length - 1 && <Caret />}
      </BigLine>
    ))}
    {caretBelow && <BigLine><Caret /></BigLine>}
  </Big>
);

const SmallTool = ({ icon, label, menu }: { icon: React.ReactNode; label: string; menu?: boolean }) => (
  <SmallButton><SmallIcon>{icon}</SmallIcon>{label}{menu && <Caret />}</SmallButton>
);

const GroupFoot = ({ label, launcher }: { label: string; launcher?: boolean }) => (
  <GroupLabel $launcher={launcher}>
    <span>{label}</span>
    {launcher && <PlainButton aria-label={`${label} options`}><LauncherIcon /></PlainButton>}
  </GroupLabel>
);

const RibbonView = () => (
  <Ribbon aria-label="Home ribbon">
    <Group $w={142}>
      <GroupBody $pad={3}>
        <BigTool w={42} icon={<PasteIcon />} lines={["Paste"]} caretBelow />
        <SmallList>
          <SmallTool icon={<CutIcon />} label="Cut" />
          <SmallTool icon={<CopyIcon />} label="Copy" menu />
          <SmallTool icon={<PainterIcon />} label="Format Painter" />
        </SmallList>
      </GroupBody>
      <GroupFoot label="Clipboard" launcher />
    </Group>
    <Group $w={196}>
      <GroupBody>
        <Rows>
          <Row>
            <Combo $w={105}><select aria-label="Font"><option>Calibri</option></select><Caret /></Combo>
            <Combo $w={40}><select aria-label="Font size"><option>11</option></select><Caret /></Combo>
            <Tool $w={24} aria-label="Grow font"><GrowLetter>A<Tri w={4} h={3} d="M0 3h4L2 0z" /></GrowLetter></Tool>
            <Tool $w={18} aria-label="Shrink font"><GrowLetter $small>A<Tri w={4} h={3} d="M0 0h4L2 3z" /></GrowLetter></Tool>
          </Row>
          <Row>
            <Tool $w={22}><Letter $kind="b">B</Letter></Tool>
            <Tool $w={22}><Letter $kind="i">I</Letter></Tool>
            <Tool $w={32}><Letter $kind="u">U</Letter><Caret /></Tool>
            <Divider />
            <Tool $w={32} aria-label="Borders"><BordersIcon /><Caret /></Tool>
            <Divider />
            <Tool $w={30} aria-label="Fill color"><FillColorIcon /><Caret /></Tool>
            <Tool $w={30} aria-label="Font color"><FontColorIcon /><Caret /></Tool>
          </Row>
        </Rows>
      </GroupBody>
      <GroupFoot label="Font" launcher />
    </Group>
    <Group $w={243}>
      <GroupBody>
        <Rows>
          <Row>
            <Tool $w={22} aria-label="Top align"><LinesIcon rows={full} /></Tool>
            <Tool $w={22} aria-label="Middle align"><LinesIcon rows={full} top={4} /></Tool>
            <Tool $w={22} $on aria-label="Bottom align"><LinesIcon rows={full} top={6} /></Tool>
            <Divider />
            <Tool $w={30} aria-label="Orientation"><OrientationIcon /><Caret /></Tool>
          </Row>
          <Row>
            <Tool $w={22} aria-label="Align left"><LinesIcon rows={[[0, 13], [0, 9], [0, 13], [0, 9], [0, 13], [0, 9]]} top={1} /></Tool>
            <Tool $w={22} aria-label="Center"><LinesIcon rows={[[0, 13], [2, 9], [0, 13], [2, 9], [0, 13], [2, 9]]} top={1} /></Tool>
            <Tool $w={22} aria-label="Align right"><LinesIcon rows={[[0, 13], [4, 9], [0, 13], [4, 9], [0, 13], [4, 9]]} top={1} /></Tool>
            <Divider />
            <Tool $w={21} aria-label="Decrease indent"><IndentIcon out /></Tool>
            <Tool $w={21} aria-label="Increase indent"><IndentIcon /></Tool>
          </Row>
        </Rows>
        <BlockDivider />
        <Rows>
          <Row><Tool><WrapIcon />Wrap Text</Tool></Row>
          <Row><Tool><MergeIcon />Merge &amp; Center<Caret /></Tool></Row>
        </Rows>
      </GroupBody>
      <GroupFoot label="Alignment" launcher />
    </Group>
    <Group $w={134}>
      <GroupBody>
        <Rows>
          <Row><Combo $w={126}><select aria-label="Number format"><option>General</option></select><Caret /></Combo></Row>
          <Row>
            <Tool $w={30}><Glyph>$</Glyph><Caret /></Tool>
            <Tool $w={26}><Glyph>%</Glyph></Tool>
            <Tool $w={18} aria-label="Comma style"><Tri w={5} h={7} d="M1 0h3v3.500L1.500 7H.5L2 3.500H1z" /></Tool>
            <Divider />
            <Tool $w={22} aria-label="Increase decimal"><DecimalIcon /></Tool>
            <Tool $w={20} aria-label="Decrease decimal"><DecimalIcon dec /></Tool>
          </Row>
        </Rows>
      </GroupBody>
      <GroupFoot label="Number" launcher />
    </Group>
    <Group $w={164}>
      <GroupBody $pad={3}>
        <BigTool w={66} icon={<CondIcon />} lines={["Conditional", "Formatting"]} />
        <BigTool w={52} icon={<FormatTableIcon />} lines={["Format", "as Table"]} />
        <BigTool w={40} icon={<CellStylesIcon />} lines={["Cell", "Styles"]} />
      </GroupBody>
      <GroupFoot label="Styles" />
    </Group>
    <Group $w={126}>
      <GroupBody $pad={3}>
        <BigTool w={40} icon={<InsertIcon />} lines={["Insert"]} caretBelow />
        <BigTool w={40} icon={<DeleteIcon />} lines={["Delete"]} caretBelow />
        <BigTool w={40} icon={<FormatIcon />} lines={["Format"]} caretBelow />
      </GroupBody>
      <GroupFoot label="Cells" />
    </Group>
    <Group $w={166}>
      <GroupBody $pad={8}>
        <SmallList>
          <SmallTool icon={<SumIcon />} label="AutoSum" menu />
          <SmallTool icon={<FillIcon />} label="Fill" menu />
          <SmallTool icon={<ClearIcon />} label="Clear" menu />
        </SmallList>
        <Push />
        <BigTool w={38} icon={<SortIcon />} lines={["Sort &", "Filter"]} />
        <BigTool w={44} icon={<FindIcon />} lines={["Find &", "Select"]} />
      </GroupBody>
      <GroupFoot label="Editing" />
    </Group>
  </Ribbon>
);

const blanks = (n: number) => Array.from({ length: n }, (_, i) => <Cell key={i} />);

const SheetGrid = () => (
  <Grid>
    <colgroup>
      <col width={41} />
      {columns.map((c) => <col key={c.name} width={c.w} />)}
    </colgroup>
    <thead>
      <tr>
        <Corner><Tri w={18} h={18} d="M18 0v18H0z" c="#c3c5ca" /></Corner>
        {columns.map((c) => <ColHead key={c.name} $on={c.name === "D"} scope="col">{c.name}</ColHead>)}
      </tr>
    </thead>
    <tbody>
      <tr>
        <RowHead scope="row">1</RowHead>
        {blanks(2)}
        <Cell $kind="title">Patient ID</Cell>
        <Cell $kind="title">Attending Physician<RangeBox $c="#7d2c9c" /></Cell>
        {blanks(4)}
      </tr>
      <tr>
        <RowHead scope="row" $on>2</RowHead>
        {blanks(2)}
        <Cell $kind="ref" $code>EIT-3954<RangeBox $c="#2d2fae" /></Cell>
        <Cell $kind="edit" $code colSpan={3}>
          <EditEdge />
          <FillHandle />
          <EditText>
            =VLOOKU<TextCaret />P(<Ink $c="#2b2bd0">C2</Ink>,<Ink $c="#2f9436">A4:K284</Ink>,MATCH<Ink $c="#2f9436">(</Ink>
            <Ink $c="#a324c4">D1</Ink>,<Ink $c="#86182a">A4:K4</Ink>,0<Ink $c="#2f9436">)</Ink>,FALSE)
          </EditText>
          <Hint role="tooltip"><b>VLOOKUP</b>(lookup_value, table_array, col_index_num, [range_lookup])</Hint>
          <Pointer width="15" height="21" viewBox="0 0 15 21">
            <path d="M1 1v15l3.600-3.200 2.600 6.200 2.700-1.200-2.600-6H12.500z" fill="#fff" stroke="#77797f" />
          </Pointer>
        </Cell>
        {blanks(2)}
      </tr>
      <tr>
        <RowHead scope="row">3</RowHead>
        {columns.map((c, i) => (
          <Cell key={c.name} $kind="aboveTable">{i === 0 && <RangeHandle $c="#2c7a38" />}</Cell>
        ))}
      </tr>
      <tr>
        <RowHead scope="row">4</RowHead>
        {header.map((h, i) => (
          <Cell key={h} $kind="head">{h}{i === 0 && <RangeHandle $c="#6b1423" />}</Cell>
        ))}
      </tr>
      {records.map((r, n) => (
        <tr key={r[0]}>
          <RowHead scope="row">{n + 5}</RowHead>
          {r.map((v, i) => <Cell key={i} $right={i === 2} $code={i === 0 || i === 2}>{v}</Cell>)}
        </tr>
      ))}
    </tbody>
  </Grid>
);

export default function App() {
  return (
    <Window>
      <GlobalStyle />
      <Chrome>
        <TitleBar>
          <QuickAccess>
            <ExcelIcon />
            <Divider $m={0} $c="#9aa3b5" />
            <PlainButton aria-label="Save"><SaveIcon /></PlainButton>
            <PlainButton aria-label="Undo"><UndoIcon /></PlainButton>
            <Caret $dark />
            <PlainButton aria-label="Redo"><RedoIcon /></PlainButton>
            <Caret />
            <Divider $m={0} $c="#5c6880" />
            <PlainButton aria-label="Customize toolbar"><CustomizeIcon /></PlainButton>
          </QuickAccess>
          <TitleText>Standard Data Sets.xlsx&nbsp; -&nbsp; Microsoft Excel</TitleText>
          <Caption>
            <CaptionButton $w={27} aria-label="Minimize"><MinIcon /></CaptionButton>
            <CaptionButton $w={25} aria-label="Restore"><RestoreIcon /></CaptionButton>
            <CaptionButton $w={43} $close aria-label="Close"><CloseIcon /></CaptionButton>
          </Caption>
        </TitleBar>
        <TabBar>
          <FileTab>File</FileTab>
          {tabs.map((t, i) => <Tab key={t} $active={i === 0}>{t}</Tab>)}
          <TabTools>
            <PlainButton aria-label="Collapse ribbon"><CollapseIcon /></PlainButton>
            <PlainButton aria-label="Help"><HelpIcon /></PlainButton>
            <PlainButton aria-label="Minimize workbook"><DocMinIcon /></PlainButton>
            <PlainButton aria-label="Restore workbook"><DocRestoreIcon /></PlainButton>
            <PlainButton aria-label="Close workbook"><CloseIcon line="#5d626c" /></PlainButton>
          </TabTools>
        </TabBar>
      </Chrome>
      <RibbonView />
      <FormulaBar>
        <NameBox><input aria-label="Name box" defaultValue="VLOOKUP" /><Caret $dark /></NameBox>
        <FormulaTools>
          <svg width="16" height="16" viewBox="0 0 16 16"><circle cx="8" cy="8" r="7" fill="#dcdde0" stroke="#cfd1d5" /><path d="M5 7c1-2 4-2 5 0" fill="none" stroke="#b5b7bc" /></svg>
          <PlainButton aria-label="Cancel"><svg width="10" height="10" viewBox="0 0 10 10"><path d="M1.500 1.500l7 7M8.500 1l-7 8" stroke="#36373b" strokeWidth="1.800" /></svg></PlainButton>
          <PlainButton aria-label="Enter"><svg width="13" height="11" viewBox="0 0 13 11"><path d="M1 6l3.500 3.500L12 1" fill="none" stroke="#36373b" strokeWidth="2.200" /></svg></PlainButton>
          <PlainButton aria-label="Insert function"><svg width="13" height="13" viewBox="0 0 13 13"><path d="M8.500 1.300C6.500.3 5.700 1.500 5.300 4L4.300 9.500C4 11.800 3 12.500 1 11.700M3 4.800h5" fill="none" stroke="#2c2d31" strokeWidth="1.500" /><path d="M7.500 7.500l4.500 4.500M12 7.500L7.500 12" stroke="#2c2d31" strokeWidth="1.200" /></svg></PlainButton>
        </FormulaTools>
        <FormulaInput aria-label="Formula" defaultValue="=VLOOKUP(C2,A4:K284,MATCH(D1,A4:K4,0),FALSE)" />
        <Expand aria-label="Expand formula bar"><Tri w={8} h={6} d="M0 0h2l2 3 2-3h2L4 6z" /></Expand>
      </FormulaBar>
      <SheetArea>
        <Viewport><SheetGrid /></Viewport>
        <VScroll>
          <SplitGrip />
          <PlainButton aria-label="Scroll up"><Tri w={9} h={16} d="M0 10.500h9L4.500 5.500z" /></PlainButton>
          <VThumb><Grip /></VThumb>
          <Push />
          <PlainButton aria-label="Scroll down"><Tri w={9} h={16} d="M0 5.500h9L4.500 10.500z" /></PlainButton>
        </VScroll>
      </SheetArea>
      <SheetBar>
        <SheetNav>
          <PlainButton aria-label="First sheet"><Tri d="M0 0h1.500v7H0zM6 0v7L2 3.500z" /></PlainButton>
          <PlainButton aria-label="Previous sheet"><Tri d="M5 0v7L1 3.500z" /></PlainButton>
          <PlainButton aria-label="Next sheet"><Tri d="M2 0v7l4-3.500z" /></PlainButton>
          <PlainButton aria-label="Last sheet"><Tri d="M1 0v7l4-3.500zM5.500 0H7v7H5.500z" /></PlainButton>
        </SheetNav>
        <SheetTabs>
          {sheets.map((s, i) => <SheetTab key={s} $active={i === 0}>{s}<Slant /></SheetTab>)}
        </SheetTabs>
        <SplitGrip $side />
        <HScroll>
          <PlainButton aria-label="Scroll left"><Tri w={11} d="M9 0v7L5 3.500z" /></PlainButton>
          <HTrack><HThumb><Grip vertical /></HThumb></HTrack>
          <PlainButton aria-label="Scroll right"><Tri d="M2 0v7l4-3.500z" /></PlainButton>
          <SplitGrip $side />
        </HScroll>
      </SheetBar>
      <StatusBar>
        Edit
        <Divider $m={8} $c="#a9abb0" />
        <PlainButton aria-label="Record macro"><MacroIcon /></PlainButton>
        <Divider $m={8} $c="#a9abb0" />
        <Push />
        <Divider $m={4} $c="#a9abb0" />
        <ViewButton $on aria-label="Normal view"><NormalView /></ViewButton>
        <ViewButton aria-label="Page layout view"><LayoutView /></ViewButton>
        <ViewButton aria-label="Page break view"><BreakView /></ViewButton>
        <ZoomValue>160%</ZoomValue>
        <PlainButton aria-label="Zoom out"><ZoomKnob /></PlainButton>
        <ZoomSlider type="range" aria-label="Zoom" min={0} max={100} defaultValue={61} />
        <PlainButton aria-label="Zoom in"><ZoomKnob plus /></PlainButton>
      </StatusBar>
      <Taskbar aria-label="Taskbar">
        <Pinned $w={49} aria-label="Start"><StartOrb /></Pinned>
        <Pinned $w={65} aria-label="Internet Explorer"><IeIcon /></Pinned>
        <TaskButton aria-label="Explorer"><FolderIcon /></TaskButton>
        <TaskButton aria-label="Chrome"><ChromeIcon /></TaskButton>
        <TaskButton aria-label="Outlook"><OutlookIcon /></TaskButton>
        <TaskButton aria-label="Notepad"><NotepadIcon /></TaskButton>
        <TaskButton aria-label="Java"><JavaIcon /></TaskButton>
        <TaskButton $active aria-label="Excel"><ExcelTaskIcon /></TaskButton>
        <Tray>
          <PlainButton aria-label="Hidden icons"><Tri w={14} h={7} d="M4 5.500h7L7.500 2z" c="#eef0f3" /></PlainButton>
          <FlagX /><PowerIcon /><SignalIcon /><SpeakerIcon /><DriveIcon /><DropboxIcon />
        </Tray>
        <Clock>4:56 PM<br />3/14/2013</Clock>
        <ShowDesktop aria-label="Show desktop" />
      </Taskbar>
    </Window>
  );
}
